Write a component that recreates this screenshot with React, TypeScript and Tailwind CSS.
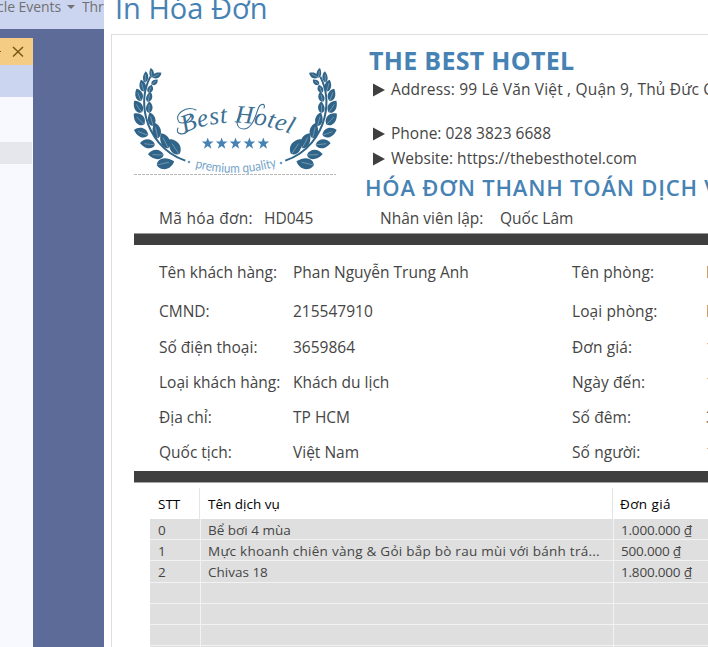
import React from "react";

const leaves: number[][] = [
  [80, 39, 29, 14, -95],
  [96, 46, 29, 17, -22],
  [62, 51, 33, 16, -84],
  [89, 67, 23, 15, -35],
  [53, 77, 36, 20, -100],
  [76, 87, 25, 17, -65],
  [42, 105, 38, 23, -105],
  [73, 111, 31, 18, -72],
  [40, 140, 41, 26, -118],
  [73, 142, 34, 20, -84],
  [43, 177, 44, 29, -128],
  [80, 178, 41, 23, -100],
  [49, 217, 44, 28, -154],
  [95, 212, 47, 26, -98],
  [68, 251, 44, 27, -168],
  [120, 242, 49, 28, -112],
  [93, 283, 46, 29, -172],
  [149, 260, 53, 32, -118],
  [121, 311, 52, 34, -6],
];

function Wreath() {
  return (
    <g transform="translate(-9 0) scale(.3333)">
      <path d="M76 50C58 85 53 130 63 172C76 225 115 280 181 302" fill="none" stroke="#306488" strokeWidth="6" />
      {leaves.map(([x, y, l, w, a], i) => (
        <g key={i} transform={`translate(${x} ${y}) rotate(${a}) scale(${l} ${w})`}>
          <path d="M-.5 .08C-.46 -.5 .02 -.75 .52 -.12C.34 .52 -.2 .76 -.5 .08Z" fill="#306488" />
          <path d="M-.5 .05Q-.1 -.05 .22 -.08" fill="none" stroke="#d3e0e8" strokeWidth="1" vectorEffect="non-scaling-stroke" strokeOpacity=".4" />
        </g>
      ))}
    </g>
  );
}

function Logo() {
  return (
    <svg width="203" height="116" viewBox="0 0 203 116" className="block overflow-visible">
      <Wreath />
      <g transform="translate(202.6 0) scale(-1 1)"><Wreath /></g>
      <path id="arch" d="M50 73Q103 50 166 78" fill="none" />
      <path id="smile" d="M61 107.5Q102 119 148 105" fill="none" />
      <g fill="none" stroke="#3c6f93" strokeWidth="1.1" strokeLinecap="round">
        <path d="M62 50C52 45 39 55 45 62C50 65 56 60 57 55" />
        <path d="M54 71C49 76 41 74 44 68" />
        <path d="M107 56C101 60 102 69 110 69C118 68 121 58 124 49C126 43 132 43 130 48" />
      </g>
      <text fill="#3c6f93" fontSize="25" className="font-['Liberation_Serif',serif] italic">
        <textPath href="#arch" textLength="110" lengthAdjust="spacing">Best Hotel</textPath>
      </text>
      {[73.7, 87.6, 101.5, 115.4, 129.3].map((x) => (
        <path key={x} transform={`translate(${x} 83.5)`} d="M0-6L1.5-1.9L5.8-1.9L2.4.8L3.7 5.2L0 2.6L-3.7 5.2L-2.4.8L-5.8-1.9L-1.5-1.9Z" fill="#4682b4" />
      ))}
      <circle cx="55" cy="102" r="1.3" fill="#6d9dc4" />
      <circle cx="147" cy="103" r="1.3" fill="#6d9dc4" />
      <text fill="#75a3c9" fontSize="13" className="font-[Lato,sans-serif]">
        <textPath href="#smile" textLength="83" lengthAdjust="spacingAndGlyphs">premium quality</textPath>
      </text>
      <path d="M0 114.5H202" stroke="#b8b8b8" strokeDasharray="3 1" />
    </svg>
  );
}

function Contact({ children }: { children: React.ReactNode }) {
  return (
    <div className="flex h-[25px] items-center text-[15.5px] whitespace-nowrap">
      <svg width="12" height="14" className="mr-[6px] ml-[5px] shrink-0"><path d="M0 .5V13.5L12 7Z" fill="#3f3f3f" /></svg>
      {children}
    </div>
  );
}

const rows = [
  { h: "h-[39px]", a: "Tên khách hàng:", b: "Phan Nguyễn Trung Anh", c: "Tên phòng:", d: "P102" },
  { h: "h-[36px]", a: "CMND:", b: "215547910", c: "Loại phòng:", d: "Phòng đơn" },
  { h: "h-[35px]", a: "Số điện thoại:", b: "3659864", c: "Đơn giá:", d: "1.000.000" },
  { h: "h-[35px]", a: "Loại khách hàng:", b: "Khách du lịch", c: "Ngày đến:", d: "11/06/2021" },
  { h: "h-[35px]", a: "Địa chỉ:", b: "TP HCM", c: "Số đêm:", d: "3" },
  { h: "h-[30px]", a: "Quốc tịch:", b: "Việt Nam", c: "Số người:", d: "1" },
];

const services = [
  ["0", "Bể bơi 4 mùa", "1.000.000 ₫"],
  ["1", "Mực khoanh chiên vàng & Gỏi bắp bò rau mùi với bánh trá...", "500.000 ₫"],
  ["2", "Chivas 18", "1.800.000 ₫"],
  ["", "", ""],
  ["", "", ""],
  ["", "", ""],
  ["", "", ""],
];

export default function App() {
  return (
    <div className="flex h-[647px] w-[708px] overflow-hidden bg-white font-['Open_Sans','Noto_Sans',sans-serif] text-[#454545]">
      <aside className="flex w-[104px] shrink-0 flex-col overflow-hidden bg-[#5d6b99]">
        <div className="flex h-[29px] shrink-0 items-start bg-[#ccd5f0] text-[14px] leading-[14px] whitespace-nowrap text-[#717171]">
          <span className="-ml-[3px] w-[66px] shrink-0 tracking-[-0.05px]">cle Events</span>
          <svg width="8" height="5" className="mt-[5px] ml-[4px] shrink-0"><path d="M0 0H8L4 4Z" fill="#717171" /></svg>
          <span className="ml-[7px] w-[22px] shrink-0 overflow-hidden tracking-[-0.1px]">Thr</span>
        </div>
        <div className="mt-[9px] flex w-[33px] grow flex-col bg-[#f7f9fe]">
          <div className="flex h-[27px] items-center bg-[#f5cc84]">
            <span className="h-px w-px bg-[#795b18]" />
            <svg width="12" height="12" className="ml-[11px]"><path d="M1 1L11 10.5M11 1L1 10.5" stroke="#795b18" strokeWidth="1.6" /></svg>
          </div>
          <div className="h-8 bg-[#ccd5f0]" />
          <div className="mt-[45px] h-[22px] w-8 bg-[#e6e7ed]" />
        </div>
      </aside>
      <main className="w-[604px] shrink-0 overflow-hidden">
        <h1 className="-mt-[14px] h-12 pl-[11px] text-[29px] leading-[43px] whitespace-nowrap text-[#4682b4]">In Hóa Đơn</h1>
        <section className="ml-[7px] h-[620px] w-[900px] border border-[#dedede] pl-[22px]">
          <header className="flex h-[173px]">
            <div className="w-[230px] shrink-0 pt-[25px]"><Logo /></div>
            <div className="pt-[11px]">
              <h2 className="h-[31px] pl-[5px] text-[25px] leading-[29px] font-bold tracking-[0.3px] whitespace-nowrap text-[#4682b4]">THE BEST HOTEL</h2>
              <div className="flex h-[44px] items-start pl-[4px] tracking-[0.17px]"><Contact>Address: 99 Lê Văn Việt , Quận 9, Thủ Đức City</Contact></div>
              <div className="pl-[4px]"><Contact>Phone: 028 3823 6688</Contact><Contact>Website: https://thebesthotel.com</Contact></div>
              <h3 className="h-[32px] pl-[1px] text-[22px] leading-[32px] font-semibold tracking-[0.8px] whitespace-nowrap text-[#4682b4]">HÓA ĐƠN THANH TOÁN DỊCH VỤ</h3>
            </div>
          </header>
          <div className="mt-[-2px] flex h-[27px] items-start pl-[25px] text-[15.5px] leading-[25px] whitespace-nowrap">
            <span className="w-[105px] tracking-[0.3px]">Mã hóa đơn:</span>
            <span className="w-[116px]">HD045</span>
            <span className="w-[120px]">Nhân viên lập:</span>
            <span>Quốc Lâm</span>
          </div>
          <div className="h-[12px] border-t border-[#9a9a9a] bg-[#3f3f3f]" />
          <div className="pt-[15px] pl-[25px] text-[15.5px] leading-[24px] whitespace-nowrap">
            {rows.map((r) => (
              <div key={r.a} className={`flex ${r.h}`}>
                <span className="w-[134px]">{r.a}</span>
                <span className="w-[279px]">{r.b}</span>
                <span className="w-[134px] tracking-[0.1px]">{r.c}</span>
                <span>{r.d}</span>
              </div>
            ))}
          </div>
          <div className="mt-[1px] h-[12px] border-b border-[#a5a5a5] bg-[#3f3f3f]" />
          <div className="pt-[5px] pl-4 text-[13.5px] whitespace-nowrap">
            <div className="flex h-[31px] leading-[32px] text-black">
              <span className="w-[50px] border-r border-[#e5e5e5] pl-2">STT</span>
              <span className="w-[413px] border-r border-[#e5e5e5] pl-2">Tên dịch vụ</span>
              <span className="pl-[7px] tracking-[0.4px]">Đơn giá</span>
            </div>
            {services.map((s, i) => (
              <div key={i} className="flex h-[21.2px] border-b border-[#f2f2f2] bg-[#dfdfdf] leading-[22px]">
                <span className="w-[51px] border-r border-[#f2f2f2] pl-2">{s[0]}</span>
                <span className={`w-[413px] border-r border-[#f2f2f2] pl-[7px] ${i === 1 ? "tracking-[0.25px]" : ""}`}>{s[1]}</span>
                <span className="pl-[7px] tracking-[-0.2px]">{s[2]}</span>
              </div>
            ))}
          </div>
        </section>
      </main>
    </div>
  );
}
